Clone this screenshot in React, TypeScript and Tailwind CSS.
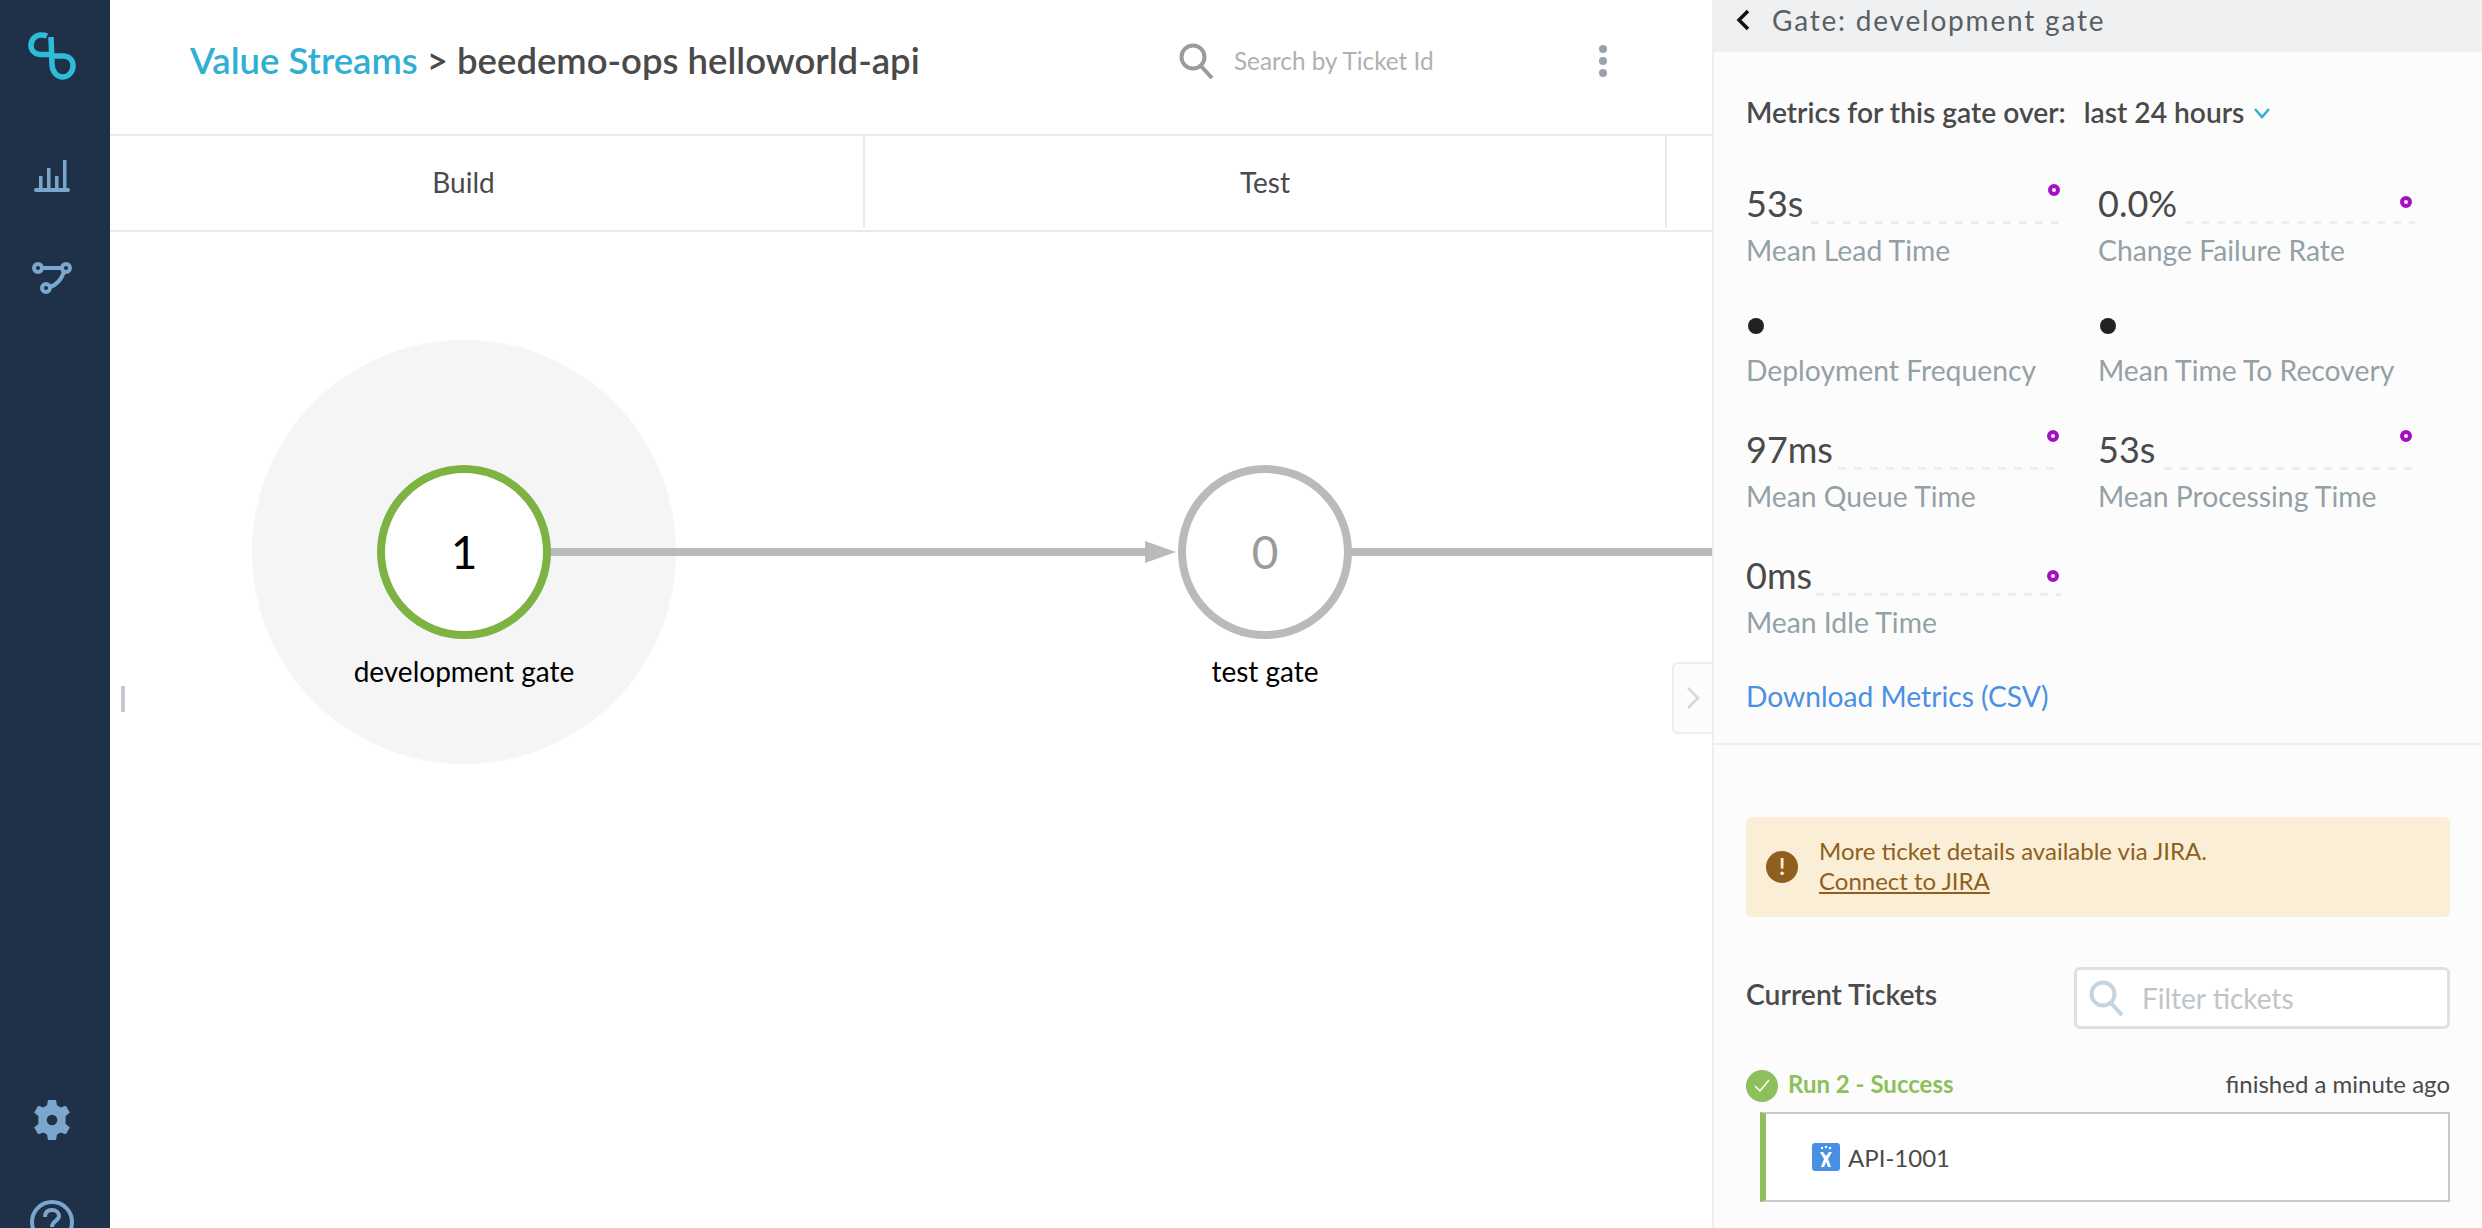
const font = { fontFamily: 'Lato, "Noto Sans", sans-serif' };

const Logo = () => (
  <svg width="48" height="48" viewBox="0 0 48 48" fill="none" stroke="#2fbcd8" strokeWidth="5.500">
    <path d="M19 4 C17 3 15 3 13 3 C7 3 3 8 3 13 C3 19 7.500 22.500 13 22.500 L21 22.500" />
    <path d="M23 5 L24 32 C24 40 29 45 35 45 C41 45 45 39 45 34 C45 28 41 24 35 24 L26 24" />
  </svg>
);

const BarsIcon = () => (
  <svg width="36" height="32" viewBox="0 0 36 32" fill="#7ba7cf">
    <rect x="5" y="16" width="3.500" height="14" />
    <rect x="13" y="8" width="3.500" height="22" />
    <rect x="21" y="16" width="3.500" height="14" />
    <rect x="29" y="0" width="3.500" height="30" />
    <rect x="0" y="28" width="36" height="4" rx="2" />
  </svg>
);

const FlowIcon = () => (
  <svg width="40" height="32" viewBox="0 0 40 32" fill="none" stroke="#7ba7cf" strokeWidth="4">
    <circle cx="6" cy="6" r="4" />
    <circle cx="34" cy="6" r="4" />
    <circle cx="14" cy="26" r="4" />
    <path d="M10 6 L30 6" />
    <path d="M32 10 C29 18 25 23 18 25" />
  </svg>
);

const GearIcon = () => (
  <svg width="40" height="40" viewBox="0 0 24 24" fill="#7ba7cf">
    <path
      fillRule="evenodd"
      d="M9.600 0 H14.400 L15 3.300 C15.800 3.600 16.500 4 17.100 4.500 L20.300 3.400 L22.700 7.500 L20.100 9.700 C20.200 10.500 20.200 13.500 20.100 14.300 L22.700 16.500 L20.300 20.600 L17.100 19.500 C16.500 20 15.800 20.400 15 20.700 L14.400 24 H9.600 L9 20.700 C8.200 20.400 7.500 20 6.900 19.500 L3.700 20.600 L1.300 16.500 L3.900 14.300 C3.800 13.500 3.800 10.500 3.900 9.700 L1.300 7.500 L3.700 3.400 L6.900 4.500 C7.500 4 8.200 3.600 9 3.300 Z M12 8.800 A3.200 3.200 0 1 0 12 15.200 A3.200 3.200 0 1 0 12 8.800 Z"
    />
  </svg>
);

const HelpIcon = () => (
  <svg width="44" height="44" viewBox="0 0 44 44" fill="none" stroke="#7ba7cf" strokeWidth="4">
    <circle cx="22" cy="22" r="20" />
    <path d="M15 17 C15 12 18 10 22 10 C26 10 29 12.500 29 16 C29 21 22 21 22 27" />
  </svg>
);

const SearchIcon = ({ size, color }: { size: number; color: string }) => (
  <svg width={size} height={size} viewBox="0 0 36 36" fill="none" stroke={color} strokeWidth="4">
    <circle cx="14" cy="14" r="11.500" />
    <path d="M22 23 L33 35" />
  </svg>
);

function Sidebar() {
  return (
    <div className="flex h-full w-[110px] shrink-0 flex-col items-center overflow-hidden bg-[#1e3149] pr-[6px] pt-[32px]">
      <Logo />
      <div className="mt-[80px]">
        <BarsIcon />
      </div>
      <div className="mt-[70px]">
        <FlowIcon />
      </div>
      <div className="mt-auto">
        <GearIcon />
      </div>
      <div className="mt-[60px] -mb-[16px]">
        <HelpIcon />
      </div>
    </div>
  );
}

function Header() {
  return (
    <div className="flex h-[136px] shrink-0 items-center border-b-2 border-[#e9ecef] pb-[12px] pl-[80px]">
      <div className="-mt-[2px] w-[989px] text-[36.5px] font-semibold text-[#4a4a4a]">
        <span className="text-[#2fafd4]">Value Streams</span> &gt; beedemo-ops helloworld-api
      </div>
      <SearchIcon size={36} color="#9b9b9b" />
      <span className="ml-[19px] w-[365px] text-[24.300px] text-[#b0b0b0]">Search by Ticket Id</span>
      <div className="flex flex-col gap-[4px]">
        <span className="h-[8px] w-[8px] rounded-full bg-[#9aa1ab]" />
        <span className="h-[8px] w-[8px] rounded-full bg-[#9aa1ab]" />
        <span className="h-[8px] w-[8px] rounded-full bg-[#9aa1ab]" />
      </div>
    </div>
  );
}

function Tabs() {
  return (
    <div className="flex h-[96px] shrink-0 border-b-2 border-[#e9ecef] pb-[2px] text-[28px] text-[#4a4a4a]">
      <div className="flex w-[755px] items-center justify-center border-r-2 border-[#e9ecef] pr-[46px]">Build</div>
      <div className="flex w-[802px] items-center justify-center border-r-2 border-[#e9ecef]">Test</div>
    </div>
  );
}

function Node({ left, label, count, active }: { left: string; label: string; count: string; active?: boolean }) {
  return (
    <div className={`absolute top-[233px] flex w-[300px] flex-col items-center ${left}`}>
      <div
        className={
          active
            ? 'flex h-[174px] w-[174px] items-center justify-center rounded-full border-[8px] border-[#7cb342] bg-white pb-[2px] text-[46px] text-black'
            : 'flex h-[174px] w-[174px] items-center justify-center rounded-full border-[8px] border-[#bababa] bg-white pb-[2px] text-[46px] text-[#9b9b9b]'
        }
      >
        {count}
      </div>
      <div className="mt-[11px] text-[28px] text-black">{label}</div>
    </div>
  );
}

function Canvas() {
  return (
    <div className="relative flex-1 overflow-hidden bg-white">
      {/* graph, coordinates relative to the canvas */}
      <div className="absolute left-[142px] top-[108px] h-[424px] w-[424px] rounded-full bg-[#f5f5f5]" />
      <svg className="absolute left-0 top-0" width="1602" height="500" fill="#bababa">
        <rect x="440" y="316" width="596" height="8" />
        <polygon points="1035,309 1066,320 1035,331" />
        <rect x="1240" y="316" width="362" height="8" />
      </svg>
      <Node left="left-[204px]" label="development gate" count="1" active />
      <Node left="left-[1005px]" label="test gate" count="0" />
      <div className="absolute left-[11px] top-[454px] h-[26px] w-[4px] bg-[#c5c9d3]" />
      <div className="absolute left-[1562px] top-[430px] flex h-[72px] w-[40px] items-center justify-center rounded-l-[6px] border-2 border-r-0 border-[#eeeeee] bg-[#fcfcfc] text-[#d8d8d8]">
        <svg width="14" height="24" viewBox="0 0 14 24" fill="none" stroke="currentColor" strokeWidth="2.500">
          <path d="M2 2 L12 12 L2 22" />
        </svg>
      </div>
    </div>
  );
}

function Metric({ value, label, dash, ring }: { value?: string; label: string; dash?: string; ring?: string }) {
  return (
    <div className="relative">
      {value ? (
        <div className="flex h-[46px] justify-start">
          <span className="text-[36px] leading-[50px] text-[#4a4a4a]">{value}</span>
          <span
            className={`mt-[43px] h-[3px] bg-[repeating-linear-gradient(90deg,#eeeeee_0,#eeeeee_8px,transparent_8px,transparent_16px)] ${dash}`}
          />
        </div>
      ) : (
        <div className="flex h-[40px] items-center pl-[2px] pt-[3px]">
          <span className="h-[16px] w-[16px] rounded-full bg-[#222222]" />
        </div>
      )}
      {ring && <span className={`absolute h-[12px] w-[12px] rounded-full border-[4px] border-[#a50fc4] ${ring}`} />}
      <div className="mt-[10px] text-[28.300px] leading-[32px] text-[#93a1a6]">{label}</div>
    </div>
  );
}

function Panel() {
  return (
    <div className="flex h-full w-[770px] shrink-0 flex-col overflow-hidden border-l-2 border-[#eeeeee] bg-[#fcfcfc]">
      <div className="flex h-[52px] shrink-0 items-center bg-[#eff0f2] pb-[12px] pl-[22px] text-[28px] tracking-[1.800px] text-[#5a5f63]">
        <svg width="14" height="22" viewBox="0 0 14 22" fill="none" stroke="#111111" strokeWidth="3.500">
          <path d="M12 2 L3 11 L12 20" />
        </svg>
        <span className="ml-[22px]">Gate: development gate</span>
      </div>
      <div className="flex flex-col pl-[32px] pr-[32px]">
        <div className="mt-[40px] flex h-[40px] items-center text-[28.200px] font-semibold text-[#4a4a4a]">
          Metrics for this gate over:
          <span className="ml-[18px]">last 24 hours</span>
          <svg className="ml-[10px] mt-[2px]" width="16" height="12" viewBox="0 0 16 12" fill="none" stroke="#2fafd4" strokeWidth="2.500">
            <path d="M1 2 L8 10 L15 2" />
          </svg>
        </div>
        <div className="mt-[46px] grid w-[704px] grid-cols-[352px_1fr] gap-y-[38px]">
          <Metric value="53s" label="Mean Lead Time" dash="ml-[8px] w-[250px]" ring="left-[302px] top-[6px]" />
          <Metric value="0.0%" label="Change Failure Rate" dash="ml-[8px] w-[230px]" ring="left-[302px] top-[18px]" />
          <Metric label="Deployment Frequency" />
          <Metric label="Mean Time To Recovery" />
          <Metric value="97ms" label="Mean Queue Time" dash="ml-[5px] w-[217px]" ring="left-[301px] top-[6px]" />
          <Metric value="53s" label="Mean Processing Time" dash="ml-[9px] w-[249px]" ring="left-[302px] top-[6px]" />
          <Metric value="0ms" label="Mean Idle Time" dash="ml-[4px] w-[245px]" ring="left-[301px] top-[20px]" />
        </div>
        <div className="mt-[41px] text-[28.200px] leading-[34px] text-[#4a90e2]">Download Metrics (CSV)</div>
      </div>
      <div className="mt-[30px] h-[2px] shrink-0 bg-[#eeeeee]" />
      <div className="flex flex-col pl-[32px] pr-[32px]">
        <div className="mt-[72px] flex h-[100px] items-center rounded-[6px] bg-[#fbeed6] pl-[20px] text-[24px] leading-[30px] text-[#8f5f1e]">
          <div className="flex h-[32px] w-[32px] items-center justify-center rounded-full bg-[#8f5f1e] text-[22px] font-bold text-[#fbeed6]">!</div>
          <div className="ml-[21px] pb-[2px]">
            <div>More ticket details available via JIRA.</div>
            <div className="underline">Connect to JIRA</div>
          </div>
        </div>
        <div className="mt-[50px] flex items-center justify-between">
          <div className="mt-[-8px] text-[28.300px] font-semibold text-[#4a4a4a]">Current Tickets</div>
          <div className="flex h-[62px] w-[376px] items-center rounded-[6px] border-[3px] border-[#e0e0e0] bg-white pl-[12px] text-[28px] text-[#c0c4c8]">
            <SearchIcon size={36} color="#c5d4de" />
            <span className="ml-[17px]">Filter tickets</span>
          </div>
        </div>
        <div className="mt-[40px] flex items-center justify-between text-[24px]">
          <div className="flex items-center font-bold text-[#8bc05a]">
            <div className="flex h-[32px] w-[32px] items-center justify-center rounded-full bg-[#8bc05a]">
              <svg width="16" height="14" viewBox="0 0 16 14" fill="none" stroke="#ffffff" strokeWidth="1.500">
                <path d="M1 7 L6 12 L15 1" />
              </svg>
            </div>
            <span className="ml-[10px] -mt-[3px]">Run 2 - Success</span>
          </div>
          <div className="-mt-[3px] text-[#4a4a4a]">finished a minute ago</div>
        </div>
        <div className="ml-[14px] mt-[10px] flex h-[90px] items-center border-2 border-l-[6px] border-[#c8c8c8] border-l-[#8bc05a] bg-white pl-[46px] text-[24px] text-[#4a4a4a]">
          <div className="flex h-[28px] w-[28px] items-center justify-center rounded-[3px] bg-[#4a90e2]">
            <svg width="16" height="24" viewBox="0 0 16 24" fill="#ffffff">
              <circle cx="4" cy="3" r="1.200" />
              <circle cx="8" cy="2" r="1.200" />
              <circle cx="12" cy="3" r="1.200" />
              <path d="M2 7 L5 7 L8 11 L11 7 L14 7 L10 14 L13 22 L10 22 L8 17 L6 22 L3 22 L6 14 Z" />
            </svg>
          </div>
          <span className="ml-[8px] mt-[2px]">API-1001</span>
        </div>
      </div>
    </div>
  );
}

export default function App() {
  return (
    <div className="flex h-screen w-full overflow-hidden bg-white" style={font}>
      <Sidebar />
      <div className="flex min-w-0 flex-1 flex-col">
        <Header />
        <Tabs />
        <Canvas />
      </div>
      <Panel />
    </div>
  );
}
